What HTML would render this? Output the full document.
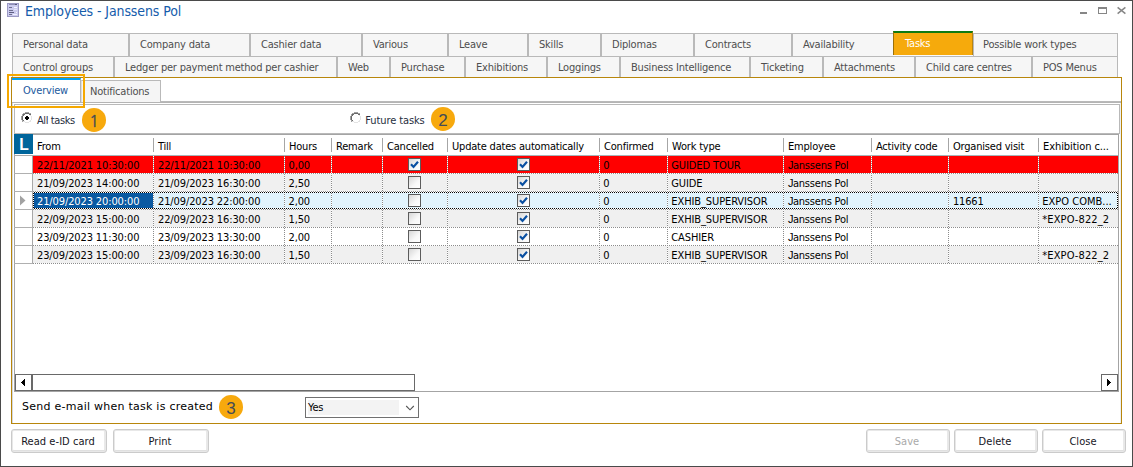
<!DOCTYPE html>
<html lang="en"><head><meta charset="utf-8"><title>Employees - Janssens Pol</title>
<style>
html,body{margin:0;padding:0;background:#fff;}
body{width:1133px;height:467px;position:relative;overflow:hidden;font-family:"DejaVu Sans Condensed","Liberation Sans",sans-serif;font-size:11px;color:#000;}
div,span,svg{position:absolute;box-sizing:border-box;}
.g{left:0;top:0;width:0;height:0;}
.t{white-space:nowrap;line-height:16px;height:16px;letter-spacing:-0.2px;}
.tab{background:#f6f6f6;border:1px solid #b9b9b9;box-shadow:inset 1px 1px 0 #fbfbfb;}
.tt{color:#4e4e4e;}
.btn{background:#fff;border:1px solid #cbcbcb;border-radius:3px;box-shadow:inset 0 0 0 1px #e8e8e8, inset 0 -2px 0 0 #e0e0e0, inset -2px 0 0 0 #e9e9e9;}
.bt{color:#16161e;text-align:center;letter-spacing:0.05px;}
.hs{background:#a6a6a6;width:1px;}
.vd{width:1px;background-image:repeating-linear-gradient(to bottom,#8c8c8c 0 1px,#fff 1px 2px);}
.vo{width:1px;background-image:repeating-linear-gradient(to bottom,#fff 0 1px,#8c8c8c 1px 2px);}
.hd{height:1px;background-image:repeating-linear-gradient(to right,#8c8c8c 0 1px,#fff 1px 2px);}
.fh{height:1px;background-image:repeating-linear-gradient(to right,#fff 0 1px,#000 1px 2px);}
.fv{width:1px;background-image:repeating-linear-gradient(to bottom,#fff 0 1px,#000 1px 2px);}
.jf::first-letter{font-family:"Liberation Sans",sans-serif;letter-spacing:-0.6px;line-height:0;}
.badge{border-radius:50%;background:#f7a90d;width:24.5px;height:24px;}
.bd{color:#414a58;font-family:"Liberation Sans",sans-serif;font-size:17px;line-height:20px;height:20px;width:24px;text-align:center;opacity:0.99;}
.b1{font-family:"NanumGothic","Liberation Sans",sans-serif;font-size:16px;-webkit-text-stroke:0.35px #414a58;}
</style></head><body>

<div style="left:0px;top:0px;width:1133px;height:467px;border:1px solid #4a4a4a;"></div>
<div class="g" role="banner" aria-label="Title bar">
<svg style="left:7px;top:3px" width="12" height="14" viewBox="0 0 12 14" shape-rendering="crispEdges">
<rect x="0" y="0" width="12" height="14" fill="#9c9ac4"/>
<rect x="1" y="1" width="10" height="12" fill="#cbcbee"/>
<rect x="2" y="1" width="8" height="1" fill="#8f8fb5"/><rect x="8" y="1" width="2" height="1" fill="#55557a"/>
<rect x="2" y="4" width="3" height="1" fill="#6e6e90"/><rect x="7" y="4" width="3" height="1" fill="#f4f4ff"/>
<rect x="2" y="7" width="4" height="1" fill="#6e6e90"/><rect x="7" y="6" width="3" height="1" fill="#e4e4fa"/>
<rect x="2" y="9" width="5" height="1" fill="#5e5e82"/><rect x="9" y="9" width="1" height="1" fill="#f4f4ff"/>
<rect x="2" y="11" width="3" height="1" fill="#6e6e90"/><rect x="6" y="11" width="4" height="1" fill="#f0f0ff"/>
</svg>
<span class="t" style="left:25px;top:1px;line-height:20px;height:20px;font-size:14px;color:#155cab;letter-spacing:-0.1px;">Employees - Janssens Pol</span>
<svg style="left:1078px;top:5px" width="52" height="12" viewBox="0 0 52 12">
<rect x="2" y="7" width="7" height="2" fill="#868686" shape-rendering="crispEdges"/>
<rect x="20" y="2" width="9" height="7" fill="#868686" shape-rendering="crispEdges"/>
<rect x="21" y="4" width="7" height="4" fill="#ffffff" shape-rendering="crispEdges"/>
<path d="M39.6 2.4 L47.4 8.6 M47.4 2.4 L39.6 8.6" stroke="#868686" stroke-width="1.5" fill="none"/>
</svg>
</div>
<div class="g" role="tablist" aria-label="Employee sections">
<div style="left:12px;top:33px;width:1106px;height:1px;background:#b9b9b9;"></div>
<div style="left:12px;top:34px;width:1106px;height:22px;background:#f6f6f6;"></div>
<div style="left:12px;top:56px;width:1106px;height:1px;background:#b9b9b9;"></div>
<div style="left:12px;top:57px;width:1106px;height:20px;background:#f6f6f6;"></div>
<div style="left:12px;top:34px;width:1px;height:22px;background:#b9b9b9;"></div>
<div style="left:128px;top:34px;width:1px;height:22px;background:#b9b9b9;"></div>
<span class="t tt" style="left:23px;top:37px;">Personal data</span>
<div style="left:129px;top:34px;width:1px;height:22px;background:#b9b9b9;"></div>
<div style="left:249px;top:34px;width:1px;height:22px;background:#b9b9b9;"></div>
<span class="t tt" style="left:140px;top:37px;">Company data</span>
<div style="left:250px;top:34px;width:1px;height:22px;background:#b9b9b9;"></div>
<div style="left:361px;top:34px;width:1px;height:22px;background:#b9b9b9;"></div>
<span class="t tt" style="left:261px;top:37px;">Cashier data</span>
<div style="left:362px;top:34px;width:1px;height:22px;background:#b9b9b9;"></div>
<div style="left:447px;top:34px;width:1px;height:22px;background:#b9b9b9;"></div>
<span class="t tt" style="left:373px;top:37px;">Various</span>
<div style="left:448px;top:34px;width:1px;height:22px;background:#b9b9b9;"></div>
<div style="left:527px;top:34px;width:1px;height:22px;background:#b9b9b9;"></div>
<span class="t tt" style="left:459px;top:37px;">Leave</span>
<div style="left:528px;top:34px;width:1px;height:22px;background:#b9b9b9;"></div>
<div style="left:600px;top:34px;width:1px;height:22px;background:#b9b9b9;"></div>
<span class="t tt" style="left:539px;top:37px;">Skills</span>
<div style="left:601px;top:34px;width:1px;height:22px;background:#b9b9b9;"></div>
<div style="left:693px;top:34px;width:1px;height:22px;background:#b9b9b9;"></div>
<span class="t tt" style="left:612px;top:37px;">Diplomas</span>
<div style="left:694px;top:34px;width:1px;height:22px;background:#b9b9b9;"></div>
<div style="left:791px;top:34px;width:1px;height:22px;background:#b9b9b9;"></div>
<span class="t tt" style="left:705px;top:37px;">Contracts</span>
<div style="left:792px;top:34px;width:1px;height:22px;background:#b9b9b9;"></div>
<span class="t tt" style="left:803px;top:37px;">Availability</span>
<div style="left:973px;top:34px;width:1px;height:22px;background:#b9b9b9;"></div>
<div style="left:1117px;top:34px;width:1px;height:22px;background:#b9b9b9;"></div>
<span class="t tt" style="left:983px;top:37px;">Possible work types</span>
<div style="left:12px;top:57px;width:1px;height:20px;background:#b9b9b9;"></div>
<div style="left:113px;top:57px;width:1px;height:20px;background:#b9b9b9;"></div>
<span class="t tt" style="left:23px;top:60px;">Control groups</span>
<div style="left:114px;top:57px;width:1px;height:20px;background:#b9b9b9;"></div>
<div style="left:336px;top:57px;width:1px;height:20px;background:#b9b9b9;"></div>
<span class="t tt" style="left:125px;top:60px;">Ledger per payment method per cashier</span>
<div style="left:337px;top:57px;width:1px;height:20px;background:#b9b9b9;"></div>
<div style="left:389px;top:57px;width:1px;height:20px;background:#b9b9b9;"></div>
<span class="t tt" style="left:348px;top:60px;">Web</span>
<div style="left:390px;top:57px;width:1px;height:20px;background:#b9b9b9;"></div>
<div style="left:464px;top:57px;width:1px;height:20px;background:#b9b9b9;"></div>
<span class="t tt" style="left:401px;top:60px;">Purchase</span>
<div style="left:465px;top:57px;width:1px;height:20px;background:#b9b9b9;"></div>
<div style="left:546px;top:57px;width:1px;height:20px;background:#b9b9b9;"></div>
<span class="t tt" style="left:476px;top:60px;">Exhibitions</span>
<div style="left:547px;top:57px;width:1px;height:20px;background:#b9b9b9;"></div>
<div style="left:619px;top:57px;width:1px;height:20px;background:#b9b9b9;"></div>
<span class="t tt" style="left:558px;top:60px;">Loggings</span>
<div style="left:620px;top:57px;width:1px;height:20px;background:#b9b9b9;"></div>
<div style="left:749px;top:57px;width:1px;height:20px;background:#b9b9b9;"></div>
<span class="t tt" style="left:631px;top:60px;">Business Intelligence</span>
<div style="left:750px;top:57px;width:1px;height:20px;background:#b9b9b9;"></div>
<div style="left:822px;top:57px;width:1px;height:20px;background:#b9b9b9;"></div>
<span class="t tt" style="left:761px;top:60px;">Ticketing</span>
<div style="left:823px;top:57px;width:1px;height:20px;background:#b9b9b9;"></div>
<div style="left:914px;top:57px;width:1px;height:20px;background:#b9b9b9;"></div>
<span class="t tt" style="left:834px;top:60px;">Attachments</span>
<div style="left:915px;top:57px;width:1px;height:20px;background:#b9b9b9;"></div>
<div style="left:1031px;top:57px;width:1px;height:20px;background:#b9b9b9;"></div>
<span class="t tt" style="left:926px;top:60px;">Child care centres</span>
<div style="left:1032px;top:57px;width:1px;height:20px;background:#b9b9b9;"></div>
<div style="left:1117px;top:57px;width:1px;height:20px;background:#b9b9b9;"></div>
<span class="t tt" style="left:1043px;top:60px;">POS Menus</span>
<div style="left:893px;top:31px;width:80px;height:24px;background:#f6aa0c;border-top:2px solid #0f7a12;border-left:1px solid #9c7008;border-right:1px solid #b98510;"></div>
<div style="left:893px;top:55px;width:80px;height:1px;background:#fafafa;"></div>
<span class="t" style="left:905px;top:36px;color:#fff;">Tasks</span>
</div>
<div class="g" role="tabpanel" aria-label="Tasks">
<div style="left:11px;top:77px;width:1111px;height:347px;border:1px solid #b8860b;background:#fff;"></div>
<div class="g" role="tablist" aria-label="Task views">
<div style="left:81px;top:80px;width:80px;height:22px;background:#f5f5f5;border:1px solid #b9b9b9;border-bottom:none;border-left-color:#dcdcdc;"></div>
<span class="t tt" style="left:90px;top:84px;">Notifications</span>
<div style="left:12px;top:78px;width:69px;height:24px;background:#fff;border-right:1px solid #b4b4b4;border-top:2px solid #00a2f4;"></div>
<span class="t" style="left:23px;top:83px;color:#1c5a9e;">Overview</span>
</div>
<div style="left:161px;top:101px;width:960px;height:1px;background:#b9b9b9;"></div>
<div style="left:12px;top:102px;width:1109px;height:1px;background:#b4b4b4;"></div>
<div style="left:12px;top:103px;width:1px;height:320px;background:#d3d7de;"></div>
<div style="left:1120px;top:103px;width:1px;height:320px;background:#eceff4;"></div>
<div style="left:14px;top:104px;width:1106px;height:30px;border:1px solid #b9b9b9;"></div>
<div style="left:7px;top:74px;width:78px;height:34px;border:2px solid #f5a800;"></div>
<div class="g" role="radiogroup" aria-label="Task filter">
<svg style="left:21px;top:112px" width="12" height="12" viewBox="0 0 12 12" shape-rendering="crispEdges"><rect x="4" y="0" width="4" height="1" fill="#a0a0a0"/><rect x="2" y="1" width="2" height="1" fill="#a0a0a0"/><rect x="8" y="1" width="2" height="1" fill="#a0a0a0"/><rect x="1" y="2" width="1" height="1" fill="#a0a0a0"/><rect x="10" y="2" width="1" height="1" fill="#ffffff"/><rect x="1" y="3" width="1" height="1" fill="#a0a0a0"/><rect x="10" y="3" width="1" height="1" fill="#ffffff"/><rect x="0" y="4" width="1" height="1" fill="#a0a0a0"/><rect x="11" y="4" width="1" height="1" fill="#ffffff"/><rect x="0" y="5" width="1" height="1" fill="#a0a0a0"/><rect x="11" y="5" width="1" height="1" fill="#ffffff"/><rect x="0" y="6" width="1" height="1" fill="#a0a0a0"/><rect x="11" y="6" width="1" height="1" fill="#ffffff"/><rect x="0" y="7" width="1" height="1" fill="#a0a0a0"/><rect x="11" y="7" width="1" height="1" fill="#ffffff"/><rect x="1" y="8" width="1" height="1" fill="#a0a0a0"/><rect x="10" y="8" width="1" height="1" fill="#ffffff"/><rect x="1" y="9" width="1" height="1" fill="#a0a0a0"/><rect x="10" y="9" width="1" height="1" fill="#ffffff"/><rect x="2" y="10" width="2" height="1" fill="#ffffff"/><rect x="8" y="10" width="2" height="1" fill="#ffffff"/><rect x="4" y="11" width="4" height="1" fill="#ffffff"/><rect x="4" y="1" width="4" height="1" fill="#696969"/><rect x="2" y="2" width="2" height="1" fill="#696969"/><rect x="8" y="2" width="2" height="1" fill="#696969"/><rect x="2" y="3" width="1" height="1" fill="#696969"/><rect x="9" y="3" width="1" height="1" fill="#e3e3e3"/><rect x="1" y="4" width="1" height="1" fill="#696969"/><rect x="10" y="4" width="1" height="1" fill="#e3e3e3"/><rect x="1" y="5" width="1" height="1" fill="#696969"/><rect x="10" y="5" width="1" height="1" fill="#e3e3e3"/><rect x="1" y="6" width="1" height="1" fill="#696969"/><rect x="10" y="6" width="1" height="1" fill="#e3e3e3"/><rect x="1" y="7" width="1" height="1" fill="#696969"/><rect x="10" y="7" width="1" height="1" fill="#e3e3e3"/><rect x="2" y="8" width="1" height="1" fill="#696969"/><rect x="9" y="8" width="1" height="1" fill="#e3e3e3"/><rect x="2" y="9" width="2" height="1" fill="#e3e3e3"/><rect x="8" y="9" width="2" height="1" fill="#e3e3e3"/><rect x="4" y="10" width="4" height="1" fill="#e3e3e3"/><rect x="5" y="4" width="2" height="1" fill="#000000"/><rect x="4" y="5" width="4" height="1" fill="#000000"/><rect x="4" y="6" width="4" height="1" fill="#000000"/><rect x="5" y="7" width="2" height="1" fill="#000000"/></svg>
<span class="t" style="left:37px;top:113px;color:#262d40;letter-spacing:-0.4px;">All tasks</span>
<svg style="left:350px;top:112px" width="12" height="12" viewBox="0 0 12 12" shape-rendering="crispEdges"><rect x="4" y="0" width="4" height="1" fill="#a0a0a0"/><rect x="2" y="1" width="2" height="1" fill="#a0a0a0"/><rect x="8" y="1" width="2" height="1" fill="#a0a0a0"/><rect x="1" y="2" width="1" height="1" fill="#a0a0a0"/><rect x="10" y="2" width="1" height="1" fill="#ffffff"/><rect x="1" y="3" width="1" height="1" fill="#a0a0a0"/><rect x="10" y="3" width="1" height="1" fill="#ffffff"/><rect x="0" y="4" width="1" height="1" fill="#a0a0a0"/><rect x="11" y="4" width="1" height="1" fill="#ffffff"/><rect x="0" y="5" width="1" height="1" fill="#a0a0a0"/><rect x="11" y="5" width="1" height="1" fill="#ffffff"/><rect x="0" y="6" width="1" height="1" fill="#a0a0a0"/><rect x="11" y="6" width="1" height="1" fill="#ffffff"/><rect x="0" y="7" width="1" height="1" fill="#a0a0a0"/><rect x="11" y="7" width="1" height="1" fill="#ffffff"/><rect x="1" y="8" width="1" height="1" fill="#a0a0a0"/><rect x="10" y="8" width="1" height="1" fill="#ffffff"/><rect x="1" y="9" width="1" height="1" fill="#a0a0a0"/><rect x="10" y="9" width="1" height="1" fill="#ffffff"/><rect x="2" y="10" width="2" height="1" fill="#ffffff"/><rect x="8" y="10" width="2" height="1" fill="#ffffff"/><rect x="4" y="11" width="4" height="1" fill="#ffffff"/><rect x="4" y="1" width="4" height="1" fill="#696969"/><rect x="2" y="2" width="2" height="1" fill="#696969"/><rect x="8" y="2" width="2" height="1" fill="#696969"/><rect x="2" y="3" width="1" height="1" fill="#696969"/><rect x="9" y="3" width="1" height="1" fill="#e3e3e3"/><rect x="1" y="4" width="1" height="1" fill="#696969"/><rect x="10" y="4" width="1" height="1" fill="#e3e3e3"/><rect x="1" y="5" width="1" height="1" fill="#696969"/><rect x="10" y="5" width="1" height="1" fill="#e3e3e3"/><rect x="1" y="6" width="1" height="1" fill="#696969"/><rect x="10" y="6" width="1" height="1" fill="#e3e3e3"/><rect x="1" y="7" width="1" height="1" fill="#696969"/><rect x="10" y="7" width="1" height="1" fill="#e3e3e3"/><rect x="2" y="8" width="1" height="1" fill="#696969"/><rect x="9" y="8" width="1" height="1" fill="#e3e3e3"/><rect x="2" y="9" width="2" height="1" fill="#e3e3e3"/><rect x="8" y="9" width="2" height="1" fill="#e3e3e3"/><rect x="4" y="10" width="4" height="1" fill="#e3e3e3"/></svg>
<span class="t" style="left:365.3px;top:113px;color:#262d40;letter-spacing:-0.1px;">Future tasks</span>
<div class="badge" style="left:81.75px;top:108.4px;"></div>
<span class="bd b1" style="left:82px;top:111px;">1</span>
<div class="badge" style="left:430.75px;top:107.4px;"></div>
<span class="bd" style="left:431px;top:111px;">2</span>
</div>
<div class="g" role="grid" aria-label="Tasks">
<div style="left:14px;top:134px;width:1105px;height:258px;border:1px solid #a4a4a4;"></div>
<div style="left:14px;top:134px;width:19px;height:20px;background:#00659b;"></div>
<span class="t" style="left:14.4px;top:135px;width:19px;height:20px;line-height:20px;text-align:center;font-family:'Liberation Sans',sans-serif;font-weight:bold;font-size:15.6px;color:#fff;letter-spacing:0;">L</span>
<span class="t" style="left:37px;top:139px;">From</span>
<span class="t" style="left:158px;top:139px;">Till</span>
<div class="hs" style="left:153px;top:138px;width:1px;height:14px;"></div>
<span class="t" style="left:289px;top:139px;">Hours</span>
<div class="hs" style="left:284px;top:138px;width:1px;height:14px;"></div>
<span class="t" style="left:336px;top:139px;">Remark</span>
<div class="hs" style="left:331px;top:138px;width:1px;height:14px;"></div>
<span class="t" style="left:387px;top:139px;">Cancelled</span>
<div class="hs" style="left:382px;top:138px;width:1px;height:14px;"></div>
<span class="t" style="left:452px;top:139px;">Update dates automatically</span>
<div class="hs" style="left:447px;top:138px;width:1px;height:14px;"></div>
<span class="t" style="left:604px;top:139px;">Confirmed</span>
<div class="hs" style="left:599px;top:138px;width:1px;height:14px;"></div>
<span class="t" style="left:672px;top:139px;">Work type</span>
<div class="hs" style="left:667px;top:138px;width:1px;height:14px;"></div>
<span class="t" style="left:788px;top:139px;">Employee</span>
<div class="hs" style="left:783px;top:138px;width:1px;height:14px;"></div>
<span class="t" style="left:876px;top:139px;">Activity code</span>
<div class="hs" style="left:871px;top:138px;width:1px;height:14px;"></div>
<span class="t" style="left:953px;top:139px;">Organised visit</span>
<div class="hs" style="left:948px;top:138px;width:1px;height:14px;"></div>
<span class="t" style="left:1043px;top:139px;letter-spacing:-0.08px;">Exhibition c...</span>
<div class="hs" style="left:1038px;top:138px;width:1px;height:14px;"></div>
<div style="left:14px;top:155px;width:19px;height:1px;background:#a8a8a8;"></div>
<div style="left:33px;top:155px;width:1085px;height:1px;background:#a6b4b8;"></div>
<div style="left:32px;top:156px;width:1px;height:108px;background:#a8a8a8;"></div>
<div style="left:33px;top:156px;width:1085px;height:17px;background:#ff0000;"></div>
<span class="t" style="left:37px;top:158px;letter-spacing:-0.12px;">22/11/2021 10:30:00</span>
<span class="t" style="left:158px;top:158px;letter-spacing:-0.12px;">22/11/2021 10:30:00</span>
<span class="t" style="left:288.6px;top:158px;">0,00</span>
<svg style="left:408px;top:158px" width="13" height="13" viewBox="0 0 13 13">
<defs><linearGradient id="cg408_158" x1="0" y1="0" x2="1" y2="1"><stop offset="0" stop-color="#d4d4d4"/><stop offset="0.6" stop-color="#f8f8f8"/><stop offset="1" stop-color="#ffffff"/></linearGradient></defs>
<rect x="0.5" y="0.5" width="12" height="12" fill="url(#cg408_158)" stroke="#5c5c5c" stroke-width="1"/>
<path d="M3 6.3 L5.5 8.9 L10 3.7" fill="none" stroke="#0a50a2" stroke-width="2.2"/></svg>
<svg style="left:517px;top:158px" width="13" height="13" viewBox="0 0 13 13">
<defs><linearGradient id="cg517_158" x1="0" y1="0" x2="1" y2="1"><stop offset="0" stop-color="#d4d4d4"/><stop offset="0.6" stop-color="#f8f8f8"/><stop offset="1" stop-color="#ffffff"/></linearGradient></defs>
<rect x="0.5" y="0.5" width="12" height="12" fill="url(#cg517_158)" stroke="#5c5c5c" stroke-width="1"/>
<path d="M3 6.3 L5.5 8.9 L10 3.7" fill="none" stroke="#0a50a2" stroke-width="2.2"/></svg>
<span class="t" style="left:603.3px;top:158px;">0</span>
<span class="t" style="left:671.3px;top:158px;letter-spacing:-0.1px;">GUIDED TOUR</span>
<span class="t jf" style="left:788px;top:158px;">Janssens Pol</span>
<div style="left:14px;top:173px;width:19px;height:1px;background:#b0b0b0;"></div>
<div class="hd" style="left:33px;top:173px;width:1085px;height:1px;"></div>
<div style="left:33px;top:174px;width:1085px;height:17px;background:#f0f0f0;"></div>
<span class="t" style="left:37px;top:176px;letter-spacing:-0.12px;">21/09/2023 14:00:00</span>
<span class="t" style="left:158px;top:176px;letter-spacing:-0.12px;">21/09/2023 16:30:00</span>
<span class="t" style="left:288.6px;top:176px;">2,50</span>
<svg style="left:408px;top:176px" width="13" height="13" viewBox="0 0 13 13">
<defs><linearGradient id="cg408_176" x1="0" y1="0" x2="1" y2="1"><stop offset="0" stop-color="#d4d4d4"/><stop offset="0.6" stop-color="#f8f8f8"/><stop offset="1" stop-color="#ffffff"/></linearGradient></defs>
<rect x="0.5" y="0.5" width="12" height="12" fill="url(#cg408_176)" stroke="#5c5c5c" stroke-width="1"/>
</svg>
<svg style="left:517px;top:176px" width="13" height="13" viewBox="0 0 13 13">
<defs><linearGradient id="cg517_176" x1="0" y1="0" x2="1" y2="1"><stop offset="0" stop-color="#d4d4d4"/><stop offset="0.6" stop-color="#f8f8f8"/><stop offset="1" stop-color="#ffffff"/></linearGradient></defs>
<rect x="0.5" y="0.5" width="12" height="12" fill="url(#cg517_176)" stroke="#5c5c5c" stroke-width="1"/>
<path d="M3 6.3 L5.5 8.9 L10 3.7" fill="none" stroke="#0a50a2" stroke-width="2.2"/></svg>
<span class="t" style="left:603.3px;top:176px;">0</span>
<span class="t" style="left:671.3px;top:176px;letter-spacing:-0.1px;">GUIDE</span>
<span class="t jf" style="left:788px;top:176px;">Janssens Pol</span>
<div style="left:14px;top:191px;width:19px;height:1px;background:#b0b0b0;"></div>
<div class="hd" style="left:33px;top:191px;width:1085px;height:1px;"></div>
<div style="left:33px;top:192px;width:1085px;height:17px;background:#e1f3fc;"></div>
<div style="left:33px;top:193px;width:120px;height:15px;background:#0a5aa2;"></div>
<span class="t" style="left:37px;top:194px;color:#fff;letter-spacing:-0.12px;">21/09/2023 20:00:00</span>
<span class="t" style="left:158px;top:194px;letter-spacing:-0.12px;">21/09/2023 22:00:00</span>
<span class="t" style="left:288.6px;top:194px;">2,00</span>
<svg style="left:408px;top:194px" width="13" height="13" viewBox="0 0 13 13">
<defs><linearGradient id="cg408_194" x1="0" y1="0" x2="1" y2="1"><stop offset="0" stop-color="#d4d4d4"/><stop offset="0.6" stop-color="#f8f8f8"/><stop offset="1" stop-color="#ffffff"/></linearGradient></defs>
<rect x="0.5" y="0.5" width="12" height="12" fill="url(#cg408_194)" stroke="#5c5c5c" stroke-width="1"/>
</svg>
<svg style="left:517px;top:194px" width="13" height="13" viewBox="0 0 13 13">
<defs><linearGradient id="cg517_194" x1="0" y1="0" x2="1" y2="1"><stop offset="0" stop-color="#d4d4d4"/><stop offset="0.6" stop-color="#f8f8f8"/><stop offset="1" stop-color="#ffffff"/></linearGradient></defs>
<rect x="0.5" y="0.5" width="12" height="12" fill="url(#cg517_194)" stroke="#5c5c5c" stroke-width="1"/>
<path d="M3 6.3 L5.5 8.9 L10 3.7" fill="none" stroke="#0a50a2" stroke-width="2.2"/></svg>
<span class="t" style="left:603.3px;top:194px;">0</span>
<span class="t" style="left:671.3px;top:194px;letter-spacing:-0.1px;">EXHIB_SUPERVISOR</span>
<span class="t jf" style="left:788px;top:194px;">Janssens Pol</span>
<span class="t" style="left:953px;top:194px;">11661</span>
<span class="t" style="left:1042.3px;top:194px;letter-spacing:0;">EXPO COMB...</span>
<div style="left:14px;top:209px;width:19px;height:1px;background:#b0b0b0;"></div>
<div class="hd" style="left:33px;top:209px;width:1085px;height:1px;"></div>
<div style="left:33px;top:210px;width:1085px;height:17px;background:#f0f0f0;"></div>
<span class="t" style="left:37px;top:212px;letter-spacing:-0.12px;">22/09/2023 15:00:00</span>
<span class="t" style="left:158px;top:212px;letter-spacing:-0.12px;">22/09/2023 16:30:00</span>
<span class="t" style="left:288.6px;top:212px;">1,50</span>
<svg style="left:408px;top:212px" width="13" height="13" viewBox="0 0 13 13">
<defs><linearGradient id="cg408_212" x1="0" y1="0" x2="1" y2="1"><stop offset="0" stop-color="#d4d4d4"/><stop offset="0.6" stop-color="#f8f8f8"/><stop offset="1" stop-color="#ffffff"/></linearGradient></defs>
<rect x="0.5" y="0.5" width="12" height="12" fill="url(#cg408_212)" stroke="#5c5c5c" stroke-width="1"/>
</svg>
<svg style="left:517px;top:212px" width="13" height="13" viewBox="0 0 13 13">
<defs><linearGradient id="cg517_212" x1="0" y1="0" x2="1" y2="1"><stop offset="0" stop-color="#d4d4d4"/><stop offset="0.6" stop-color="#f8f8f8"/><stop offset="1" stop-color="#ffffff"/></linearGradient></defs>
<rect x="0.5" y="0.5" width="12" height="12" fill="url(#cg517_212)" stroke="#5c5c5c" stroke-width="1"/>
<path d="M3 6.3 L5.5 8.9 L10 3.7" fill="none" stroke="#0a50a2" stroke-width="2.2"/></svg>
<span class="t" style="left:603.3px;top:212px;">0</span>
<span class="t" style="left:671.3px;top:212px;letter-spacing:-0.1px;">EXHIB_SUPERVISOR</span>
<span class="t jf" style="left:788px;top:212px;">Janssens Pol</span>
<span class="t" style="left:1042.3px;top:212px;letter-spacing:0.1px;">*EXPO-822_2</span>
<div style="left:14px;top:227px;width:19px;height:1px;background:#b0b0b0;"></div>
<div class="hd" style="left:33px;top:227px;width:1085px;height:1px;"></div>
<div style="left:33px;top:228px;width:1085px;height:17px;background:#ffffff;"></div>
<span class="t" style="left:37px;top:230px;letter-spacing:-0.12px;">23/09/2023 11:30:00</span>
<span class="t" style="left:158px;top:230px;letter-spacing:-0.12px;">23/09/2023 13:30:00</span>
<span class="t" style="left:288.6px;top:230px;">2,00</span>
<svg style="left:408px;top:230px" width="13" height="13" viewBox="0 0 13 13">
<defs><linearGradient id="cg408_230" x1="0" y1="0" x2="1" y2="1"><stop offset="0" stop-color="#d4d4d4"/><stop offset="0.6" stop-color="#f8f8f8"/><stop offset="1" stop-color="#ffffff"/></linearGradient></defs>
<rect x="0.5" y="0.5" width="12" height="12" fill="url(#cg408_230)" stroke="#5c5c5c" stroke-width="1"/>
</svg>
<svg style="left:517px;top:230px" width="13" height="13" viewBox="0 0 13 13">
<defs><linearGradient id="cg517_230" x1="0" y1="0" x2="1" y2="1"><stop offset="0" stop-color="#d4d4d4"/><stop offset="0.6" stop-color="#f8f8f8"/><stop offset="1" stop-color="#ffffff"/></linearGradient></defs>
<rect x="0.5" y="0.5" width="12" height="12" fill="url(#cg517_230)" stroke="#5c5c5c" stroke-width="1"/>
<path d="M3 6.3 L5.5 8.9 L10 3.7" fill="none" stroke="#0a50a2" stroke-width="2.2"/></svg>
<span class="t" style="left:603.3px;top:230px;">0</span>
<span class="t" style="left:671.3px;top:230px;letter-spacing:-0.1px;">CASHIER</span>
<span class="t jf" style="left:788px;top:230px;">Janssens Pol</span>
<div style="left:14px;top:245px;width:19px;height:1px;background:#b0b0b0;"></div>
<div class="hd" style="left:33px;top:245px;width:1085px;height:1px;"></div>
<div style="left:33px;top:246px;width:1085px;height:17px;background:#f0f0f0;"></div>
<span class="t" style="left:37px;top:248px;letter-spacing:-0.12px;">23/09/2023 15:00:00</span>
<span class="t" style="left:158px;top:248px;letter-spacing:-0.12px;">23/09/2023 16:30:00</span>
<span class="t" style="left:288.6px;top:248px;">1,50</span>
<svg style="left:408px;top:248px" width="13" height="13" viewBox="0 0 13 13">
<defs><linearGradient id="cg408_248" x1="0" y1="0" x2="1" y2="1"><stop offset="0" stop-color="#d4d4d4"/><stop offset="0.6" stop-color="#f8f8f8"/><stop offset="1" stop-color="#ffffff"/></linearGradient></defs>
<rect x="0.5" y="0.5" width="12" height="12" fill="url(#cg408_248)" stroke="#5c5c5c" stroke-width="1"/>
</svg>
<svg style="left:517px;top:248px" width="13" height="13" viewBox="0 0 13 13">
<defs><linearGradient id="cg517_248" x1="0" y1="0" x2="1" y2="1"><stop offset="0" stop-color="#d4d4d4"/><stop offset="0.6" stop-color="#f8f8f8"/><stop offset="1" stop-color="#ffffff"/></linearGradient></defs>
<rect x="0.5" y="0.5" width="12" height="12" fill="url(#cg517_248)" stroke="#5c5c5c" stroke-width="1"/>
<path d="M3 6.3 L5.5 8.9 L10 3.7" fill="none" stroke="#0a50a2" stroke-width="2.2"/></svg>
<span class="t" style="left:603.3px;top:248px;">0</span>
<span class="t" style="left:671.3px;top:248px;letter-spacing:-0.1px;">EXHIB_SUPERVISOR</span>
<span class="t jf" style="left:788px;top:248px;">Janssens Pol</span>
<span class="t" style="left:1042.3px;top:248px;letter-spacing:0.1px;">*EXPO-822_2</span>
<div style="left:14px;top:263px;width:19px;height:1px;background:#b0b0b0;"></div>
<div class="hd" style="left:33px;top:263px;width:1085px;height:1px;"></div>
<div class="vo" style="left:153px;top:156px;width:1px;height:108px;"></div>
<div class="vd" style="left:284px;top:156px;width:1px;height:108px;"></div>
<div class="vo" style="left:331px;top:156px;width:1px;height:108px;"></div>
<div class="vd" style="left:382px;top:156px;width:1px;height:108px;"></div>
<div class="vo" style="left:447px;top:156px;width:1px;height:108px;"></div>
<div class="vo" style="left:599px;top:156px;width:1px;height:108px;"></div>
<div class="vo" style="left:667px;top:156px;width:1px;height:108px;"></div>
<div class="vo" style="left:783px;top:156px;width:1px;height:108px;"></div>
<div class="vo" style="left:871px;top:156px;width:1px;height:108px;"></div>
<div class="vd" style="left:948px;top:156px;width:1px;height:108px;"></div>
<div class="vd" style="left:1038px;top:156px;width:1px;height:108px;"></div>
<div class="fh" style="left:33px;top:192px;width:1085px;height:1px;"></div>
<div class="fh" style="left:33px;top:208px;width:1085px;height:1px;"></div>
<div class="fv" style="left:33px;top:192px;width:1px;height:17px;"></div>
<div class="fv" style="left:1117px;top:192px;width:1px;height:17px;"></div>
<svg style="left:19px;top:195px" width="7" height="11" viewBox="0 0 7 11"><path d="M1 0.5 L6.5 5.5 L1 10.5 Z" fill="#a2a2a2"/></svg>
</div>
<div class="g" role="scrollbar" aria-label="Horizontal scroll">
<div style="left:15px;top:374px;width:17px;height:17px;border:1px solid #696969;background:#fff;"></div>
<div style="left:32px;top:374px;width:383px;height:17px;border:1px solid #696969;background:#fff;"></div>
<svg style="left:21px;top:379px" width="4" height="7" viewBox="0 0 4 7" shape-rendering="crispEdges"><rect x="0" y="3" width="1" height="1"/><rect x="1" y="2" width="1" height="3"/><rect x="2" y="1" width="1" height="5"/><rect x="3" y="0" width="1" height="7"/></svg>
<div style="left:1101px;top:374px;width:17px;height:17px;border:1px solid #696969;background:#fff;"></div>
<svg style="left:1107px;top:379px" width="4" height="7" viewBox="0 0 4 7" shape-rendering="crispEdges"><rect x="3" y="3" width="1" height="1"/><rect x="2" y="2" width="1" height="3"/><rect x="1" y="1" width="1" height="5"/><rect x="0" y="0" width="1" height="7"/></svg>
</div>
<div class="g" role="group" aria-label="Send e-mail when task is created">
<span class="t" style="left:22px;top:399px;font-family:'DejaVu Sans','Liberation Sans',sans-serif;letter-spacing:0.25px;">Send e-mail when task is created</span>
<div class="badge" style="left:218.75px;top:395.3px;"></div>
<span class="bd" style="left:219px;top:399px;">3</span>
<div style="left:305px;top:397px;width:114px;height:21px;border:1px solid #707070;background:#fff;"></div>
<div style="left:308px;top:400px;width:91px;height:15px;background:#f3f3f3;"></div>
<span class="t" style="left:308px;top:400px;">Yes</span>
<svg style="left:405px;top:405px" width="10" height="7" viewBox="0 0 10 7"><path d="M1.2 1 L5 4.8 L8.8 1" fill="none" stroke="#555" stroke-width="1.1"/></svg>
</div>
</div>
<div class="g" role="toolbar" aria-label="Actions">
<div class="btn" style="left:11px;top:429px;width:96px;height:24px;"></div>
<span class="t bt" style="left:10px;top:434px;width:96px;">Read e-ID card</span>
<div class="btn" style="left:113px;top:429px;width:96px;height:24px;"></div>
<span class="t bt" style="left:112px;top:434px;width:96px;">Print</span>
<div class="btn" style="left:866px;top:429px;width:84px;height:24px;"></div>
<span class="t bt" style="left:865px;top:434px;width:84px;color:#a9a9a9;">Save</span>
<div class="btn" style="left:954px;top:429px;width:84px;height:24px;"></div>
<span class="t bt" style="left:953px;top:434px;width:84px;">Delete</span>
<div class="btn" style="left:1042px;top:429px;width:84px;height:24px;"></div>
<span class="t bt" style="left:1041px;top:434px;width:84px;">Close</span>
</div>
</body></html>
